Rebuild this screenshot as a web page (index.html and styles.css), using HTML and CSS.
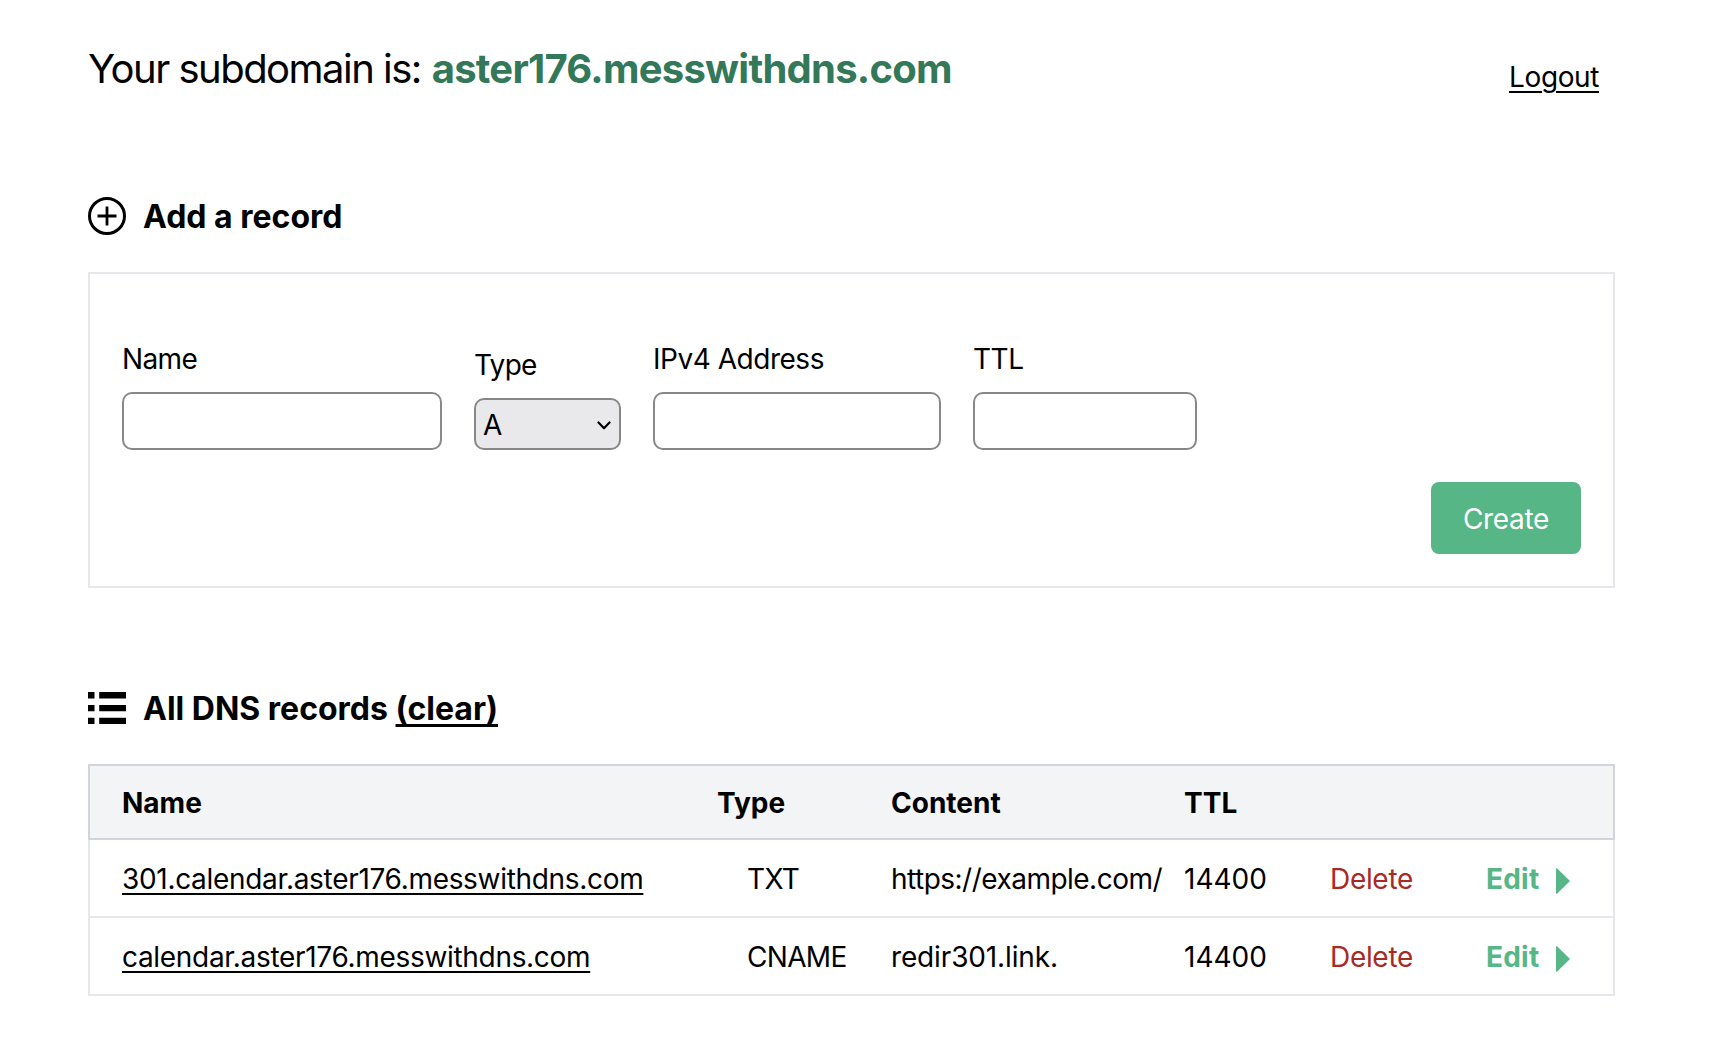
FILE: index.html
```html
<!DOCTYPE html>
<html lang="en">
<head>
<meta charset="utf-8">
<title>Mess with DNS</title>
<link rel="stylesheet" href="styles.css">
</head>
<body>
<header class="header">
  <h1 class="title"><span class="title-lead">Your subdomain is:</span> <span class="domain">aster176.messwithdns.com</span></h1>
  <a class="link logout" href="#">Logout</a>
</header>
<main class="main">
  <section>
    <h2 class="heading">
      <svg class="icon" viewBox="0 0 38 38" fill="none" stroke="#000"><circle cx="19" cy="19" r="17.5" stroke-width="3"/><path d="M19 9.500v19M9.500 19h19" stroke-width="2.800"/></svg>
      <span class="heading-text">Add a record</span>
    </h2>
    <form class="form">
      <div class="fields">
        <label class="field field-name">Name<input class="input" type="text"></label>
        <label class="field field-type">Type
          <span class="select">A<svg class="chevron" viewBox="0 0 14 9" fill="none" stroke="#000" stroke-width="2.2" stroke-linecap="round" stroke-linejoin="round"><path d="M1.5 1.5 7 7.2l5.500-5.700"/></svg></span>
        </label>
        <label class="field field-address">IPv4 Address<input class="input" type="text"></label>
        <label class="field field-ttl">TTL<input class="input" type="text"></label>
      </div>
      <button class="create" type="button">Create</button>
    </form>
  </section>
  <section>
    <h2 class="heading">
      <svg class="icon" viewBox="0 0 38 38"><path d="M0 3h6.500v6.500H0zM11.200 3H38v6.500H11.200zM0 16h6.500v6.300H0zM11.200 16H38v6.300H11.200zM0 28.700h6.500v6.300H0zM11.200 28.700H38v6.300H11.200z"/></svg>
      <span class="heading-text">All DNS records <a class="link clear" href="#">(clear)</a></span>
    </h2>
    <table class="records">
      <colgroup><col class="col-name"><col class="col-type"><col class="col-content"><col class="col-ttl"><col class="col-delete"><col></colgroup>
      <thead>
        <tr><th>Name</th><th>Type</th><th>Content</th><th>TTL</th><th></th><th></th></tr>
      </thead>
      <tbody>
        <tr>
          <td><a class="link" href="#">301.calendar.aster176.messwithdns.com</a></td>
          <td class="type">TXT</td>
          <td class="content">https://example.com/</td>
          <td class="ttl">14400</td>
          <td class="delete">Delete</td>
          <td class="edit">Edit<svg class="arrow" viewBox="0 0 14 26"><path d="M0 1Q0 0 1 .3L14 13 1 25.700Q0 26 0 25z"/></svg></td>
        </tr>
        <tr>
          <td><a class="link" href="#">calendar.aster176.messwithdns.com</a></td>
          <td class="type">CNAME</td>
          <td class="content-short">redir301.link.</td>
          <td class="ttl">14400</td>
          <td class="delete">Delete</td>
          <td class="edit">Edit<svg class="arrow" viewBox="0 0 14 26"><path d="M0 1Q0 0 1 .3L14 13 1 25.700Q0 26 0 25z"/></svg></td>
        </tr>
      </tbody>
    </table>
  </section>
</main>
</body>
</html>
```
FILE: styles.css
```css
* { box-sizing: border-box; }
body {
  margin: 0;
  padding: 45px 107px 0 88px;
  background: #fff;
  color: #000;
  font: 28px/40px Inter, "Liberation Sans", sans-serif;
  letter-spacing: -0.0112em;
}
.header { display: flex; justify-content: space-between; height: 151px; padding-right: 16px; }
.title { margin: 0; font-size: 40px; line-height: 48px; font-weight: 400; }
.title-lead { letter-spacing: -0.038em; }
.domain { color: #34785a; font-weight: 700; letter-spacing: -0.0189em; }
.link { color: #000; text-decoration: underline; text-decoration-thickness: 2px; text-underline-offset: 4px; }
.logout { margin-top: 12px; letter-spacing: -0.014em; }
.main { display: flex; flex-direction: column; gap: 100px; }
.heading { display: flex; align-items: center; gap: 17px; height: 40px; margin: 0 0 36px; font-size: 32px; font-weight: 700; letter-spacing: 0; }
.heading-text { padding-top: 2px; }
.icon { width: 38px; height: 38px; flex: none; }
.clear { text-decoration-thickness: 3px; }
.form { display: flex; flex-direction: column; gap: 32px; padding: 65px 32px 32px; border: 2px solid #e5e7eb; }
.fields { display: flex; align-items: flex-end; gap: 32px; }
.field { display: flex; flex-direction: column; gap: 13px; letter-spacing: -0.017em; }
.field-name { width: 320px; letter-spacing: -0.023em; }
.field-type { width: 147px; letter-spacing: -0.025em; }
.field-address { width: 288px; }
.field-ttl { width: 224px; }
.input { width: 100%; height: 58px; border: 2px solid #888; border-radius: 10px; background: #fff; }
.select { display: flex; align-items: center; justify-content: space-between; height: 52px; padding: 2px 8px 0 7px; border: 2px solid #888; border-radius: 10px; background: #e9e9eb; }
.chevron { width: 14px; height: 9px; }
.create { align-self: flex-end; width: 150px; height: 72px; padding: 2px 0 0; border: 0; border-radius: 8px; background: #56b686; color: #fff; font: inherit; letter-spacing: inherit; }
.records { width: 1527px; table-layout: fixed; border-collapse: separate; border-spacing: 0; }
.col-name { width: 629px; }
.col-type { width: 174px; }
.col-content { width: 293px; }
.col-ttl { width: 146px; }
.col-delete { width: 156px; }
th { height: 76px; padding: 2px 0 0; border: solid #d1d5db; border-width: 2px 0; background: #f3f4f6; text-align: left; font-weight: 700; letter-spacing: 0; }
td { height: 78px; padding: 2px 0 0; border: solid #e5e7eb; border-width: 0 0 2px; white-space: nowrap; }
th:first-child, td:first-child { padding-left: 32px; border-left-width: 2px; }
th:last-child, td:last-child { border-right-width: 2px; }
.records .type { padding-left: 30px; letter-spacing: -0.024em; }
.content { letter-spacing: -0.0184em; }
.content-short { letter-spacing: -0.005em; }
.ttl { letter-spacing: 0; }
.delete { color: #a82a24; }
.edit { color: #56b686; font-weight: 700; letter-spacing: 0.008em; }
.arrow { width: 14px; height: 26px; margin-left: 17px; vertical-align: -5px; fill: #56b686; }
```
